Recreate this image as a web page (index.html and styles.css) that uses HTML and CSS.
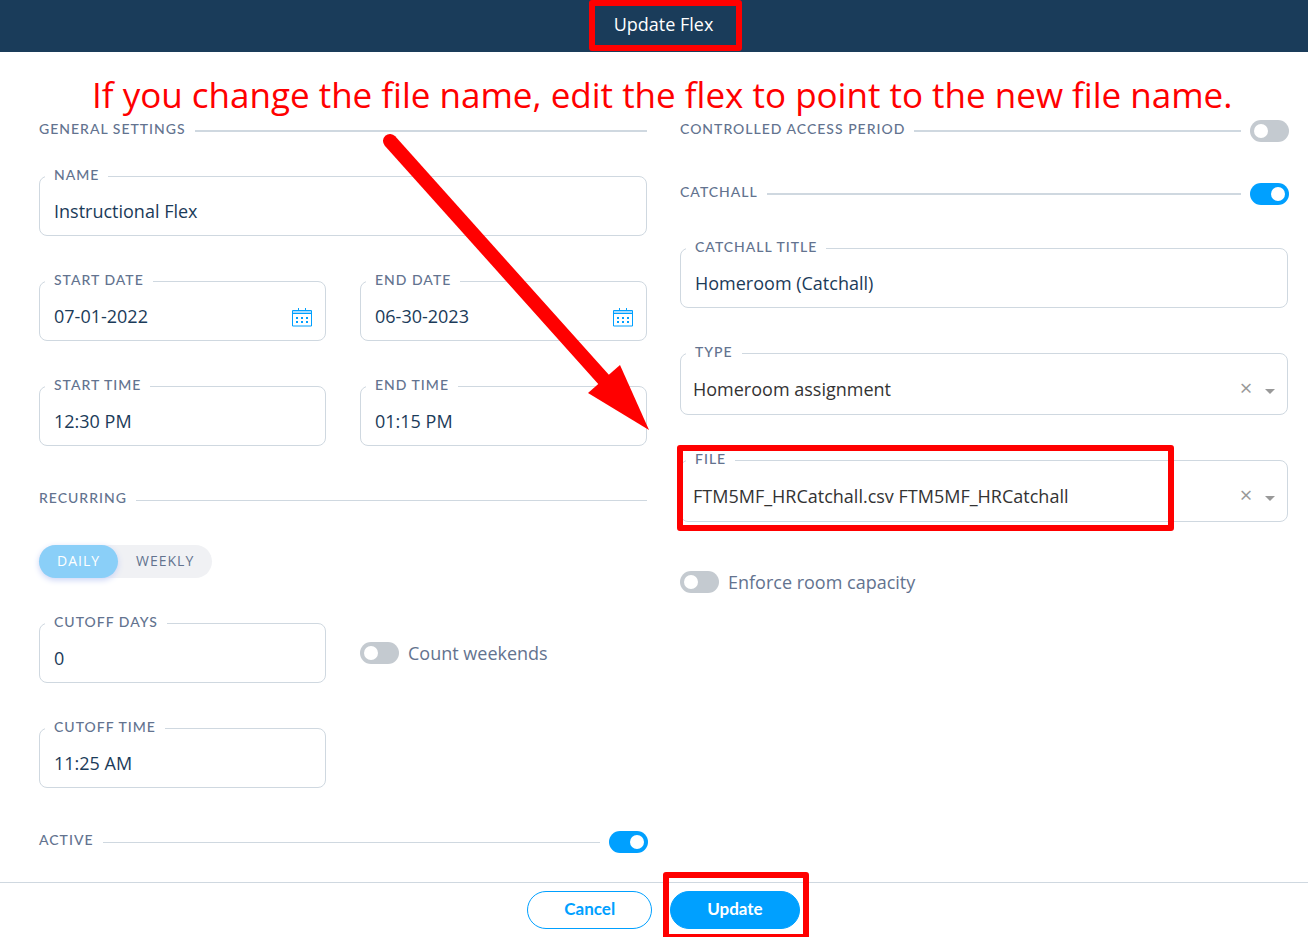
FILE: index.html
```html
<!DOCTYPE html>
<html lang="en">
<head>
<meta charset="utf-8">
<title>Update Flex</title>
<link rel="stylesheet" href="styles.css">
</head>
<body>
<form class="dialog">
  <header class="header"><h1 class="title marked marked-title">Update Flex</h1></header>
  <main class="columns">
    <div class="column">
      <div class="heading heading-strong"><h2 class="caps">General Settings</h2></div>
      <div class="fields">
        <div class="field"><label class="caps" for="name">Name</label><input id="name" type="text" value="Instructional Flex"></div>
        <div class="pair">
          <div class="field"><label class="caps" for="sd">Start Date</label><input id="sd" type="text" value="07-01-2022">
            <svg class="calendar" viewBox="0 0 20 19" aria-hidden="true"><path class="cal-line" d="M.5 2.5h19v15.5H.5zM.5 5.5h19M6.5 0v4M13.5 0v4"/><path class="cal-band" d="M1 3h18v2H1z"/><path class="cal-dots" d="M4 9h2v2H4zM9 9h2v2H9zM14 9h2v2h-2zM4 13h2v2H4zM9 13h2v2H9zM14 13h2v2h-2z"/></svg></div>
          <div class="field"><label class="caps" for="ed">End Date</label><input id="ed" type="text" value="06-30-2023">
            <svg class="calendar" viewBox="0 0 20 19" aria-hidden="true"><path class="cal-line" d="M.5 2.5h19v15.5H.5zM.5 5.5h19M6.5 0v4M13.5 0v4"/><path class="cal-band" d="M1 3h18v2H1z"/><path class="cal-dots" d="M4 9h2v2H4zM9 9h2v2H9zM14 9h2v2h-2zM4 13h2v2H4zM9 13h2v2H9zM14 13h2v2h-2z"/></svg></div>
        </div>
        <div class="pair">
          <div class="field"><label class="caps" for="st">Start Time</label><input id="st" type="text" value="12:30 PM"></div>
          <div class="field"><label class="caps" for="et">End Time</label><input id="et" type="text" value="01:15 PM"></div>
        </div>
      </div>
      <div class="heading heading-next"><h2 class="caps">Recurring</h2></div>
      <div class="fields">
        <div class="segments">
          <button type="button" class="segment segment-on">DAILY</button><button type="button" class="segment">WEEKLY</button>
        </div>
        <div class="pair">
          <div class="field"><label class="caps" for="cd">Cutoff Days</label><input id="cd" type="text" value="0"></div>
          <label class="option"><input class="switch" type="checkbox">Count weekends</label>
        </div>
        <div class="pair">
          <div class="field"><label class="caps" for="ct">Cutoff Time</label><input id="ct" type="text" value="11:25 AM"></div>
        </div>
      </div>
      <div class="heading heading-next heading-last"><label class="caps" for="active">Active</label><input class="switch" id="active" type="checkbox" checked></div>
    </div>
    <div class="column">
      <div class="heading heading-strong heading-row"><label class="caps" for="cap">Controlled Access Period</label><input class="switch" id="cap" type="checkbox"></div>
      <div class="heading heading-strong"><label class="caps" for="catch">Catchall</label><input class="switch" id="catch" type="checkbox" checked></div>
      <div class="fields fields-catchall">
        <div class="field"><label class="caps" for="cti">Catchall Title</label><input id="cti" type="text" value="Homeroom (Catchall)"></div>
        <div class="field field-select"><label class="caps" for="type">Type</label>
          <select id="type"><option>Homeroom assignment</option></select>
          <button type="button" class="clear" aria-label="Clear type">×</button>
          <svg class="caret" viewBox="0 0 10 5" aria-hidden="true"><path d="M0 0h10L5 5z"/></svg></div>
        <div class="field field-select marked marked-file"><label class="caps" for="file">File</label>
          <select id="file"><option>FTM5MF_HRCatchall.csv FTM5MF_HRCatchall</option></select>
          <button type="button" class="clear" aria-label="Clear file">×</button>
          <svg class="caret" viewBox="0 0 10 5" aria-hidden="true"><path d="M0 0h10L5 5z"/></svg></div>
        <label class="option option-last"><input class="switch" type="checkbox">Enforce room capacity</label>
      </div>
    </div>
  </main>
  <footer class="footer">
    <button type="button" class="action cancel">Cancel</button>
    <span class="marked marked-update"><button type="submit" class="action update">Update</button></span>
  </footer>
  <p class="note">If you change the file name, edit the flex to point to the new file name.</p>
  <svg class="arrow" viewBox="0 0 270 302" aria-hidden="true"><path d="M8 9L223 249" stroke="#f00" stroke-width="14" stroke-linecap="round"/><path d="M238 233L267 298L206 261z" fill="#f00"/></svg>
</form>
</body>
</html>
```

FILE: styles.css
```css
* { box-sizing: border-box; }

body {
  margin: 0;
  background: #fff;
  color: #1b3b59;
  font: 18px/24px "Open Sans", "Noto Sans", sans-serif;
}

.dialog {
  position: relative;
  min-height: 100vh;
  overflow: clip;
  display: flex;
  flex-direction: column;
}

.header {
  display: flex;
  justify-content: center;
  align-items: center;
  height: 52px;
  padding: 0 20px 4px 39px;
  background: #1a3c5a;
}

.title {
  margin: 0;
  color: #fff;
  font-size: 18px;
  font-weight: 400;
}

.columns {
  flex: 1;
  display: grid;
  grid-template-columns: 1fr 1fr;
  gap: 33px;
  padding: 68px 20px 0 39px;
}

.caps {
  margin: 0;
  color: #63738f;
  font: 500 14px/20px Lato, sans-serif;
  letter-spacing: 1px;
  text-transform: uppercase;
}

.heading {
  display: flex;
  align-items: center;
  gap: 9px;
  height: 22px;
  margin-bottom: 34px;
}
.heading .caps { padding-bottom: 5px; }
.heading::after {
  content: "";
  order: 1;
  flex: 1;
  height: 1px;
  background: #cfd8e0;
}
.heading-strong::after { height: 2px; }
.heading .switch { order: 2; margin-right: -1px; }
.heading-next { margin-top: 43px; }
.heading-row { margin-bottom: 41px; }
.heading-last { margin-bottom: 0; }

.fields {
  display: flex;
  flex-direction: column;
  gap: 45px;
}
.fields-catchall { margin-top: 43px; }

.pair {
  display: grid;
  grid-template-columns: 1fr 1fr;
  gap: 34px;
}

.field {
  position: relative;
  display: flex;
  align-items: center;
  height: 60px;
  padding: 10px 13px 0 14px;
  border: 1px solid #cfd8e0;
  border-radius: 8px;
}
.field-select {
  height: 62px;
  padding: 10px 12px 0;
}
.field .caps {
  position: absolute;
  top: -12px;
  left: 5px;
  padding: 0 9px;
  background: #fff;
}

.field input,
.field select {
  flex: 1;
  min-width: 0;
  padding: 0;
  border: 0;
  outline: 0;
  background: none;
  color: inherit;
  font: inherit;
  appearance: none;
}
.field select { color: #333; }

.calendar {
  width: 20px;
  height: 19px;
  margin-top: 2px;
}
.cal-line { fill: none; stroke: #00a0ff; }
.cal-dots { fill: #00a0ff; }
.cal-band { fill: #a6dcff; }

.clear {
  width: 20px;
  margin-right: 9px;
  padding: 0 0 4px;
  border: 0;
  background: none;
  color: #999;
  font: 22px/24px "Open Sans", sans-serif;
}
.caret {
  width: 10px;
  height: 5px;
  margin-top: 4px;
  fill: #999;
}

.switch {
  flex: none;
  width: 39px;
  height: 22px;
  margin: 0;
  padding: 4px;
  border-radius: 11px;
  background: #c4cad0;
  appearance: none;
}
.switch::before {
  content: "";
  display: block;
  width: 14px;
  height: 14px;
  border-radius: 50%;
  background: #fff;
}
.switch:checked { background: #00a0ff; }
.switch:checked::before { margin-left: auto; }

.option {
  display: flex;
  align-items: center;
  gap: 9px;
  color: #63738f;
}
.option-last { margin-top: 3px; }

.segments {
  display: flex;
  align-self: flex-start;
  height: 33px;
  border-radius: 17px;
  background: #f0f1f4;
}
.segment {
  padding: 0 18px 2px;
  border: 0;
  border-radius: 17px;
  background: none;
  color: #63738f;
  font: 14px/20px "Open Sans", sans-serif;
  letter-spacing: 1px;
}
.segment-on {
  background: #8acff8;
  color: #fff;
  box-shadow: 0 2px 6px #c9d3f5;
}

.footer {
  display: flex;
  justify-content: center;
  gap: 18px;
  height: 55px;
  padding: 8px 20px 0 39px;
  border-top: 1px solid #cfd8e0;
}
.action {
  height: 38px;
  padding: 0 36px 3px;
  border: 1px solid #00a0ff;
  border-radius: 19px;
  font: 700 17px/24px Lato, sans-serif;
}
.cancel { background: #fff; color: #00a0ff; }
.update { background: #00a0ff; color: #fff; }

.marked { position: relative; }
.marked::after {
  content: "";
  position: absolute;
  border: 6px solid #f00;
  border-radius: 3px;
  pointer-events: none;
}
.marked-title::after { inset: -12px -29px -15px -25px; }
.marked-file::after { inset: -16px 113px -10px -4px; }
.marked-update::after { inset: -19px -9px -3px -7px; }

.note {
  position: absolute;
  top: 71px;
  left: 92px;
  margin: 0;
  color: #f00;
  font-size: 35px;
  line-height: 48px;
  white-space: nowrap;
}
.arrow {
  position: absolute;
  top: 132px;
  left: 382px;
  width: 270px;
  height: 302px;
  fill: none;
  pointer-events: none;
}
```
